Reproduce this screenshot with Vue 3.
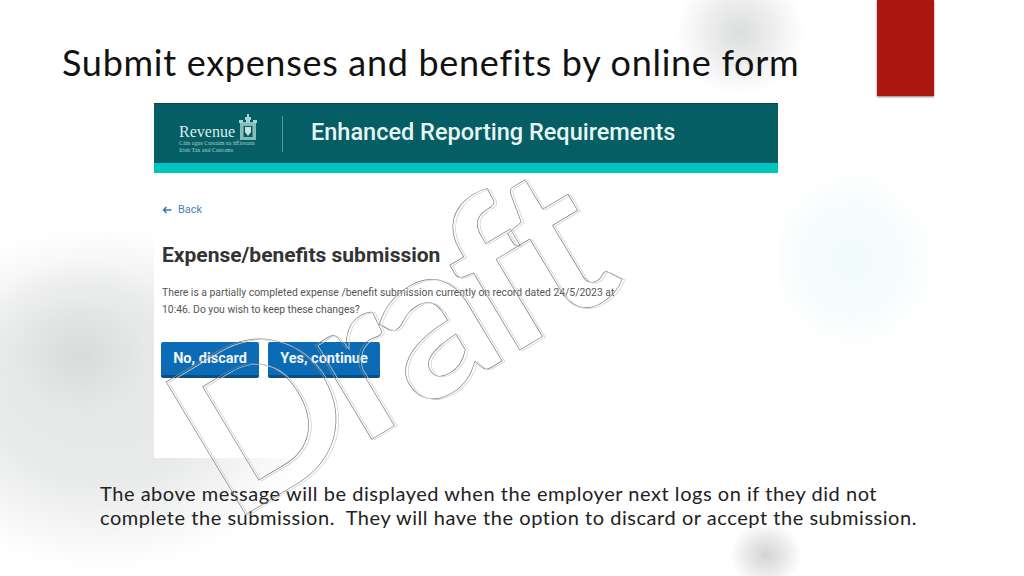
<script setup>
const blobs = [
  { id: 'wide', cls: 'blob wide' },
  { id: 'left', cls: 'blob left' },
  { id: 'top', cls: 'blob top' },
  { id: 'bottom', cls: 'blob bottom' },
  { id: 'teal', cls: 'blob teal' },
]
</script>

<template>
  <div class="slide">
    <div v-for="b in blobs" :key="b.id" :class="b.cls"></div>
    <div class="tab"></div>

    <h1 class="title">Submit expenses and benefits by online form</h1>

    <section class="shot">
      <header class="bar">
        <div class="logo">
          <div class="logo-top">
            <span class="word">Revenue</span>
            <svg class="crest" viewBox="0 0 18 26" width="18" height="26">
              <path d="M8 0h2v3H8zM6 3h6v3H6z" fill="#a9d2cf" />
              <path d="M1 8h16v18H1zM4.500 12v11h9V12z" fill="#86bcb8" />
              <path d="M0 6h4v3H0zM14 6h4v3h-4zM7 6h4v3H7z" fill="#a9d2cf" />
              <path d="M6 13h6v5l-3 4-3-4z" fill="#c9e1de" />
            </svg>
          </div>
          <div class="sub">Cáin agus Custaim na hÉireann</div>
          <div class="sub">Irish Tax and Customs</div>
        </div>
        <div class="rule"></div>
        <div class="bar-title">Enhanced Reporting Requirements</div>
      </header>
      <div class="stripe"></div>
      <div class="content">
        <a class="back">
          <svg class="arrow" viewBox="0 0 10 8" width="10" height="8">
            <path d="M9.500 4H1.500M4.500 1L1.500 4l3 3" fill="none" stroke="#2b7ab8" stroke-width="1.500" />
          </svg>
          <span>Back</span>
        </a>
        <h2 class="heading">Expense/benefits submission</h2>
        <p class="msg">There is a partially completed expense /benefit submission currently on record dated 24/5/2023 at<br />10:46. Do you wish to keep these changes?</p>
        <div class="actions">
          <button class="btn">No, discard</button>
          <button class="btn">Yes, continue</button>
        </div>
      </div>
    </section>

    <p class="note">The above message will be displayed when the employer next logs on if they did not<br />complete the submission.&nbsp; They will have the option to discard or accept the submission.</p>

    <div class="mark" data-text="Draft">Draft</div>
  </div>
</template>

<style>
html, body { margin: 0; background: #fff; }
</style>

<style scoped>
.slide {
  position: relative;
  width: 1024px;
  height: 576px;
  overflow: hidden;
  background: #fff;
  font-family: "Lato", "Liberation Sans", sans-serif;
}
.blob { position: absolute; border-radius: 50%; }
.wide {
  left: -110px; top: 225px; width: 430px; height: 345px;
  background: radial-gradient(closest-side, #e6e7e7 0%, #e9eaea 50%, rgba(255,255,255,0) 100%);
}
.left {
  left: -30px; top: 260px; width: 220px; height: 190px;
  background: radial-gradient(closest-side, #d9dada 0%, rgba(230,231,231,.6) 60%, rgba(255,255,255,0) 100%);
}
.top {
  left: 676px; top: -30px; width: 128px; height: 124px;
  background: radial-gradient(closest-side, #dcdfde 0%, #ecedec 50%, rgba(255,255,255,0) 100%);
}
.bottom {
  left: 730px; top: 522px; width: 72px; height: 66px;
  background: radial-gradient(closest-side, #d4d4d4 0%, #e8e8e8 50%, rgba(255,255,255,0) 100%);
}
.teal {
  left: 770px; top: 170px; width: 165px; height: 180px;
  background: radial-gradient(closest-side, #f1fbfb 0%, #f6fcfc 60%, rgba(255,255,255,0) 100%);
}
.tab {
  position: absolute;
  left: 877px; top: 0;
  width: 57px; height: 96px;
  background: #ac1510;
  box-shadow: 0 1px 2px rgba(0,0,0,.5);
}
.title {
  position: relative;
  margin: 0;
  box-sizing: border-box;
  height: 103px;
  padding: 41px 0 0 62px;
  font-size: 36px;
  line-height: 42px;
  font-weight: 400;
  letter-spacing: .7px;
  color: #111;
  white-space: nowrap;
}
.shot {
  position: relative;
  margin: 0 0 0 154px;
  width: 624px;
  height: 355px;
  background: #fff;
  font-family: "Roboto", "Liberation Sans", sans-serif;
}
.bar {
  height: 60px;
  background: #045e63;
  display: flex;
  align-items: center;
  border-top: 1px solid #03494d;
  box-sizing: border-box;
}
.logo { margin-left: 25px; width: 78px; color: #dcecea; font-family: "Liberation Serif", serif; }
.logo-top { display: flex; align-items: flex-end; gap: 4px; }
.word { font-size: 16px; line-height: 16px; }
.sub { font-size: 6px; line-height: 7px; color: #a9cfcc; white-space: nowrap; }
.rule { width: 1px; height: 36px; margin-left: 25px; background: #4f9a9a; }
.bar-title {
  margin: 0 0 3px 28px;
  font-size: 23.500px;
  font-weight: 500;
  color: #e9f5f4;
  white-space: nowrap;
}
.stripe { height: 10px; background: #00c4bd; }
.content { padding: 30px 0 0 8px; color: #3a3a3a; }
.back { display: flex; align-items: center; gap: 6px; color: #4a7fb5; font-size: 11px; line-height: 14px; }
.arrow { display: block; }
.heading { margin: 25px 0 0; font-size: 21px; line-height: 26px; font-weight: 700; color: #333; white-space: nowrap; }
.msg { margin: 16px 0 0; font-size: 10.360px; line-height: 17px; color: #555; white-space: nowrap; }
.actions { display: flex; gap: 9px; margin: 24px 0 0 -1px; }
.btn {
  height: 36px;
  padding: 0;
  border: 0;
  border-bottom: 3px solid #084f85;
  border-radius: 2px;
  background: #0b6cb5;
  color: #eef5fb;
  font-family: inherit;
  font-size: 14.500px;
  font-weight: 700;
}
.btn:first-child { width: 98px; }
.btn:last-child { width: 112px; }
.note {
  position: relative;
  margin: 23px 0 0 100px;
  font-size: 20px;
  font-weight: 400;
  line-height: 24px;
  letter-spacing: .54px;
  color: #222;
  white-space: nowrap;
}
.mark {
  position: absolute;
  left: 244px; top: 331px;
  font-size: 214px;
  line-height: 214px;
  font-weight: 700;
  letter-spacing: -10px;
  color: transparent;
  -webkit-text-stroke: .7px #808080;
  transform: rotate(-31deg);
  transform-origin: left bottom;
  white-space: nowrap;
  pointer-events: none;
}
.mark::after {
  content: attr(data-text);
  position: absolute;
  left: 2px; top: 2px;
  -webkit-text-stroke: .7px #cfcfcf;
}
</style>
